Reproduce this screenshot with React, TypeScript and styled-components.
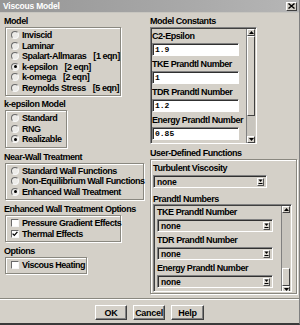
import React from 'react';
import styled, { createGlobalStyle } from 'styled-components';

const UI_FONT = '"Liberation Sans", Arial, sans-serif';
const MONO_FONT = '"Liberation Mono", "Courier New", monospace';

const GlobalStyle = createGlobalStyle`
    html, body {
        margin: 0;
        padding: 0;
        background: #d4d0c8;
    }
    * {
        box-sizing: border-box;
    }
`;

export default function App() {
    return (
        <>
            <GlobalStyle />
            <Window>
                <TitleBar>
                    <TitleText>Viscous Model</TitleText>
                    <CloseButton>
                        <svg width="7" height="6" viewBox="0 0 7 6">
                            <path d="M0.5 0.5 L6.5 5.5 M6.5 0.5 L0.5 5.5" stroke="#000" strokeWidth="1.4" />
                        </svg>
                    </CloseButton>
                </TitleBar>

                <Body>
                    <LeftColumn>
                        <SectionLabel>Model</SectionLabel>
                        <GroupBox $w={116}>
                            <Radio label="Inviscid" />
                            <Radio label="Laminar" />
                            <Radio label="Spalart-Allmaras" eqn="[1 eqn]" />
                            <Radio label="k-epsilon" eqn="[2 eqn]" checked />
                            <Radio label="k-omega" eqn="[2 eqn]" />
                            <Radio label="Reynolds Stress" eqn="[5 eqn]" />
                        </GroupBox>

                        <SectionLabel $top={1}>k-epsilon Model</SectionLabel>
                        <GroupBox $w={62}>
                            <Radio label="Standard" />
                            <Radio label="RNG" />
                            <Radio label="Realizable" checked />
                        </GroupBox>

                        <SectionLabel $top={2}>Near-Wall Treatment</SectionLabel>
                        <GroupBox $w={139}>
                            <Radio label="Standard Wall Functions" />
                            <Radio label="Non-Equilibrium Wall Functions" />
                            <Radio label="Enhanced Wall Treatment" checked />
                        </GroupBox>

                        <SectionLabel $top={2}>Enhanced Wall Treatment Options</SectionLabel>
                        <GroupBox $w={116}>
                            <Check label="Pressure Gradient Effects" />
                            <Check label="Thermal Effects" checked />
                        </GroupBox>

                        <SectionLabel $top={2}>Options</SectionLabel>
                        <GroupBox $w={82}>
                            <Check label="Viscous Heating" />
                        </GroupBox>
                    </LeftColumn>

                    <RightColumn>
                        <SectionLabel>Model Constants</SectionLabel>
                        <ScrollFrame $h={117} $w={107}>
                            <ScrollContent $pad="2px 0 0 0">
                                <FieldLabel>C2-Epsilon</FieldLabel>
                                <TextInput>1.9</TextInput>
                                <FieldLabel>TKE Prandtl Number</FieldLabel>
                                <TextInput>1</TextInput>
                                <FieldLabel>TDR Prandtl Number</FieldLabel>
                                <TextInput>1.2</TextInput>
                                <FieldLabel>Energy Prandtl Number</FieldLabel>
                                <TextInput>0.85</TextInput>
                            </ScrollContent>
                            <ScrollBar thumbBefore={0} thumb={80} />
                        </ScrollFrame>

                        <SectionLabel $top={4}>User-Defined Functions</SectionLabel>
                        <UdfBox>
                            <FieldLabel>Turbulent Viscosity</FieldLabel>
                            <Dropdown $w={114}>
                                none
                                <DropArrow />
                            </Dropdown>
                            <SectionLabel $top={3}>Prandtl Numbers</SectionLabel>
                            <ScrollFrame $h={88} $w={139}>
                                <ScrollContent $pad="1px 0 0 2px">
                                    <FieldLabel>TKE Prandtl Number</FieldLabel>
                                    <Dropdown $w={116}>
                                        none
                                        <DropArrow />
                                    </Dropdown>
                                    <FieldLabel>TDR Prandtl Number</FieldLabel>
                                    <Dropdown $w={116}>
                                        none
                                        <DropArrow />
                                    </Dropdown>
                                    <FieldLabel>Energy Prandtl Number</FieldLabel>
                                    <Dropdown $w={116}>
                                        none
                                        <DropArrow />
                                    </Dropdown>
                                </ScrollContent>
                                <ScrollBar thumbBefore={55} thumb={18} />
                            </ScrollFrame>
                        </UdfBox>
                    </RightColumn>
                </Body>

                <Separator />

                <ButtonRow>
                    <PushButton $w={32}>OK</PushButton>
                    <PushButton $w={32}>Cancel</PushButton>
                    <PushButton $w={33}>Help</PushButton>
                </ButtonRow>
            </Window>
        </>
    );
}

function Radio({ label, eqn, checked }: { label: string; eqn?: string; checked?: boolean }) {
    return (
        <OptionRow>
            <RadioCircle>{checked && <RadioDot />}</RadioCircle>
            <OptionText>{label}</OptionText>
            {eqn && <EqnText>{eqn}</EqnText>}
        </OptionRow>
    );
}

function Check({ label, checked }: { label: string; checked?: boolean }) {
    return (
        <OptionRow>
            <CheckSquare>
                {checked && (
                    <svg width="6" height="6" viewBox="0 0 6 6">
                        <path d="M0.6 2.6 L2.3 4.4 L5.4 0.8" fill="none" stroke="#000" strokeWidth="1.3" />
                    </svg>
                )}
            </CheckSquare>
            <OptionText>{label}</OptionText>
        </OptionRow>
    );
}

function ScrollBar({ thumbBefore, thumb }: { thumbBefore: number; thumb: number }) {
    return (
        <Track>
            <ArrowButton>
                <svg width="5" height="3" viewBox="0 0 5 3"><path d="M2.5 0 L5 3 L0 3 Z" fill="#000" /></svg>
            </ArrowButton>
            <TrackSpace style={{ height: thumbBefore }} />
            <Thumb style={{ height: thumb }} />
            <TrackSpace $grow />
            <ArrowButton>
                <svg width="5" height="3" viewBox="0 0 5 3"><path d="M0 0 L5 0 L2.5 3 Z" fill="#000" /></svg>
            </ArrowButton>
        </Track>
    );
}

function DropArrow() {
    return (
        <DropButton>
            <svg width="5" height="5" viewBox="0 0 5 5">
                <path d="M0.5 0.5 L4.5 0.5 L2.5 3 Z" fill="#000" />
                <rect x="0.5" y="4" width="4" height="1" fill="#000" />
            </svg>
        </DropButton>
    );
}

const Window = styled.div`
    width: 300px;
    height: 325px;
    background: #d4d0c8;
    display: flex;
    flex-direction: column;
    border-bottom: 2px solid #3a3a3a;
    border-right: 1px solid #808080;
    overflow: hidden;
`;

const TitleBar = styled.div`
    height: 13px;
    flex: none;
    display: flex;
    align-items: center;
    justify-content: space-between;
    padding: 0 2px 0 3px;
    background: linear-gradient(90deg, #969696 0%, #a8a8a8 60%, #b6b6b6 100%);
    border-bottom: 1px solid #c8c6c0;
`;

const TitleText = styled.span`
    font: bold 8.5px ${UI_FONT};
    color: #ffffff;
    letter-spacing: -0.2px;
`;

const CloseButton = styled.span`
    width: 11px;
    height: 9px;
    display: flex;
    align-items: center;
    justify-content: center;
    background: #d4d0c8;
    border: 1px solid;
    border-color: #ffffff #404040 #404040 #ffffff;
`;

const Body = styled.div`
    display: flex;
    gap: 2px;
    padding: 3px 2px 0 4px;
    height: 285px;
    flex: none;
`;

const LeftColumn = styled.div`
    width: 144px;
    display: flex;
    flex-direction: column;
    align-items: flex-start;
`;

const RightColumn = styled.div`
    flex: 1;
    display: flex;
    flex-direction: column;
    align-items: flex-start;
`;

const SectionLabel = styled.div<{ $top?: number }>`
    height: 11px;
    line-height: 11px;
    margin-top: ${p => p.$top ?? 0}px;
    font: bold 9px ${UI_FONT};
    letter-spacing: -0.45px;
    color: #000;
    white-space: nowrap;
`;

const GroupBox = styled.div<{ $w: number }>`
    width: ${p => p.$w}px;
    margin: 0 0 2px 1px;
    padding: 2px 0 2px 5px;
    border: 1px solid #8a8880;
    box-shadow: inset 1px 1px 0 #ffffff, 1px 1px 0 #ffffff;
    display: flex;
    flex-direction: column;
`;

const OptionRow = styled.div`
    height: 10.5px;
    display: flex;
    align-items: center;
    gap: 3px;
`;

const OptionText = styled.span`
    font: bold 9px ${UI_FONT};
    letter-spacing: -0.45px;
    white-space: nowrap;
    color: #000;
`;

const EqnText = styled(OptionText)`
    margin-left: 4px;
`;

const RadioCircle = styled.span`
    width: 8px;
    height: 8px;
    flex: none;
    border-radius: 50%;
    border: 1px solid;
    border-color: #6a6a6a #f8f8f8 #f8f8f8 #6a6a6a;
    background: #ecebe8;
    display: flex;
    align-items: center;
    justify-content: center;
`;

const RadioDot = styled.span`
    width: 3px;
    height: 3px;
    border-radius: 50%;
    background: #000;
`;

const CheckSquare = styled.span`
    width: 8px;
    height: 8px;
    flex: none;
    border: 1px solid;
    border-color: #6a6a6a #f8f8f8 #f8f8f8 #6a6a6a;
    background: #ffffff;
    display: flex;
    align-items: center;
    justify-content: center;
`;

const ScrollFrame = styled.div<{ $h: number; $w: number }>`
    width: ${p => p.$w}px;
    height: ${p => p.$h}px;
    flex: none;
    display: flex;
    border: 1px solid;
    border-color: #808080 #ffffff #ffffff #808080;
    box-shadow: inset 1px 1px 0 #404040;
    padding: 1px 1px 0 1px;
    overflow: hidden;
`;

const ScrollContent = styled.div<{ $pad: string }>`
    flex: 1;
    padding: ${p => p.$pad};
    display: flex;
    flex-direction: column;
    align-items: flex-start;
    overflow: hidden;
`;

const FieldLabel = styled.div`
    height: 11px;
    line-height: 11px;
    flex: none;
    font: bold 9px ${UI_FONT};
    letter-spacing: -0.45px;
    color: #000;
    white-space: nowrap;
`;

const TextInput = styled.div`
    width: 87px;
    height: 13px;
    flex: none;
    margin: 1px 0 3px 0;
    padding: 0 2px;
    background: #ffffff;
    border: 1px solid;
    border-color: #808080 #ffffff #ffffff #808080;
    box-shadow: inset 1px 1px 0 #303030;
    font: bold 8px ${MONO_FONT};
    line-height: 11px;
    color: #000;
`;

const Dropdown = styled.div<{ $w: number }>`
    width: ${p => p.$w}px;
    height: 13px;
    flex: none;
    margin: 1px 0 3px 0;
    padding: 0 2px 0 3px;
    display: flex;
    align-items: center;
    justify-content: space-between;
    background: #d4d0c8;
    border: 1px solid;
    border-color: #808080 #ffffff #ffffff #808080;
    box-shadow: inset 1px 1px 0 #303030;
    font: bold 8.5px ${UI_FONT};
    letter-spacing: -0.2px;
    color: #000;
`;

const DropButton = styled.span`
    width: 7px;
    height: 8px;
    display: flex;
    align-items: center;
    justify-content: center;
    background: #dcd9d2;
    border: 1px solid;
    border-color: #ffffff #505050 #505050 #ffffff;
`;

const Track = styled.div`
    width: 9px;
    flex: none;
    display: flex;
    flex-direction: column;
    background: #c8c5be;
    border-left: 1px solid #808080;
`;

const ArrowButton = styled.div`
    height: 7px;
    flex: none;
    display: flex;
    align-items: center;
    justify-content: center;
    background: #d4d0c8;
    border: 1px solid;
    border-color: #ffffff #404040 #404040 #ffffff;
`;

const TrackSpace = styled.div<{ $grow?: boolean }>`
    flex: ${p => (p.$grow ? '1' : 'none')};
`;

const Thumb = styled.div`
    flex: none;
    background: #d4d0c8;
    border: 1px solid;
    border-color: #ffffff #404040 #404040 #ffffff;
`;

const UdfBox = styled.div`
    width: 147px;
    height: 135px;
    padding: 3px 2px 1px 2px;
    border: 1px solid #8a8880;
    box-shadow: inset 1px 1px 0 #ffffff, 1px 1px 0 #ffffff;
    display: flex;
    flex-direction: column;
    align-items: flex-start;
`;

const Separator = styled.div`
    height: 2px;
    flex: none;
    border-top: 1px solid #8a8880;
    border-bottom: 1px solid #ffffff;
`;

const ButtonRow = styled.div`
    flex: 1;
    display: flex;
    justify-content: center;
    align-items: center;
    gap: 6px;
    padding-top: 2px;
`;

const PushButton = styled.div<{ $w: number }>`
    width: ${p => p.$w}px;
    height: 15px;
    display: flex;
    align-items: center;
    justify-content: center;
    background: #d4d0c8;
    border: 1px solid;
    border-color: #ffffff #404040 #404040 #ffffff;
    box-shadow: inset -1px -1px 0 #808080;
    font: bold 9px ${UI_FONT};
    letter-spacing: -0.3px;
    color: #000;
`;
